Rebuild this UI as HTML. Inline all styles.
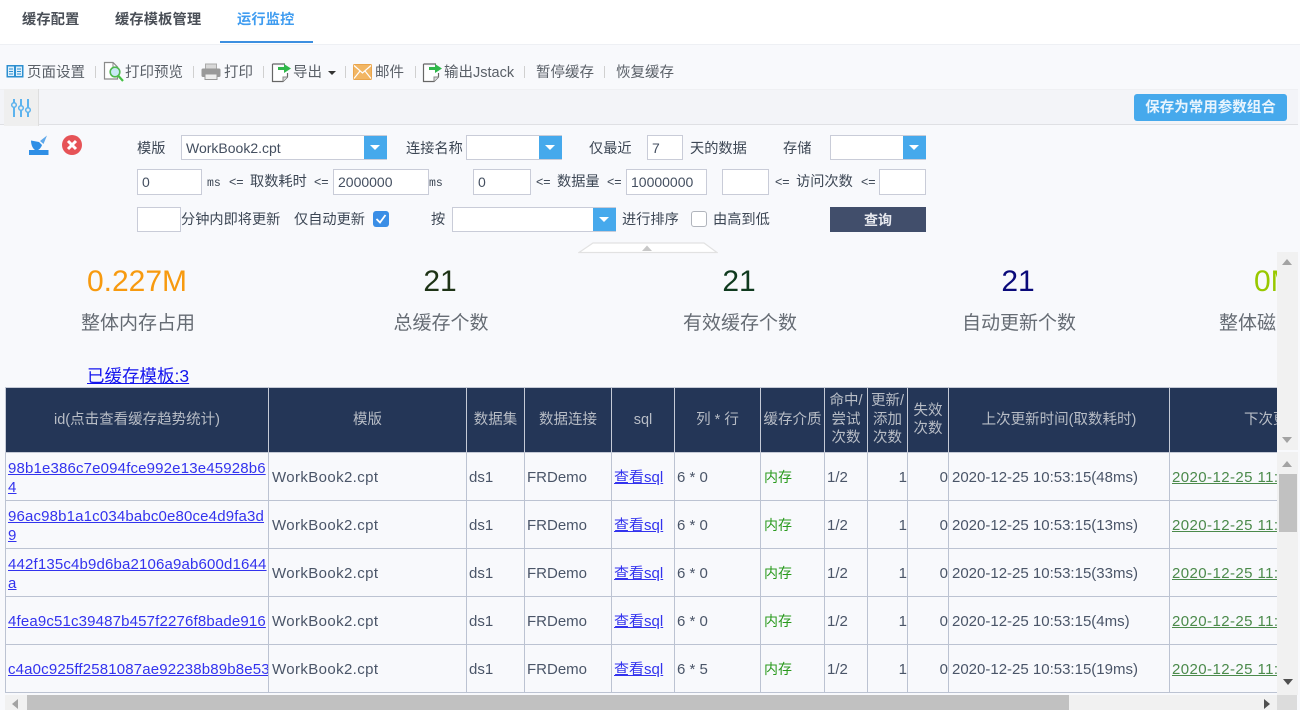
<!DOCTYPE html>
<html><head><meta charset="utf-8"><style>
html,body{margin:0;padding:0}
body{width:1300px;height:710px;position:relative;overflow:hidden;background:#f8f9fc;font-family:"Liberation Sans","Noto Sans CJK SC",sans-serif;color:#444f60;font-size:14px}
.a{position:absolute;white-space:nowrap}
.i{position:absolute;box-sizing:border-box;background:#fff;border:1px solid #c9ccd8;height:26px;padding:0 4px;line-height:24px;font-size:14px;color:#444f60}
.b{position:absolute;background:#46a9ec;height:23px;width:23px}
.b:after{content:"";position:absolute;left:6px;top:9px;border:5px solid transparent;border-top:5px solid #fff;border-bottom:0}
.sep{position:absolute;top:66px;width:1px;height:12px;background:#d0d0d0}
.t{font-size:14.5px;color:#5a6068;top:64px;line-height:18px}
.l{font-size:14.2px;color:#3c4654;line-height:20px}
.m{font-family:"Liberation Mono",monospace;font-size:11.5px}
.e{font-size:12.5px;color:#3c4654;line-height:20px}
.n{font-size:30px;line-height:36px;top:264px;transform:translateX(-50%)}
.c{font-size:19px;line-height:26px;top:311px;color:#666c74;transform:translateX(-50%)}
table{position:absolute;left:0;top:0;border-collapse:collapse;table-layout:fixed;width:1400px}
td,th{border:1px solid #bcc3d2;padding:0 2px;overflow:hidden;box-sizing:border-box}
th{background:#243657;color:#b8bdc6;font-weight:normal;font-size:14.5px;line-height:18.500px;border-color:#c5cad6;padding:0;height:65px}
td{height:48px;padding-top:2px;font-size:15px;line-height:19px;color:#4a5568;background:#f8f9fc;white-space:nowrap}
td a{color:#3333ee;text-decoration:underline}
td.id{letter-spacing:.16px}
td.w{padding-left:3px;letter-spacing:.38px}
td.x{padding-left:3px}
td.g{color:#2a9a1e;font-size:14px;padding-left:3px}
td a.h{color:#4b8a4b;letter-spacing:.42px}
td.r{text-align:right;padding-right:0}
</style></head><body>

<div class="a" style="left:0;top:0;width:1300px;height:44px;background:#fff"></div>
<div class="a" style="left:0;top:44px;width:1300px;height:1px;background:#eef0f4"></div>
<div class="a" style="left:22px;top:10px;font-size:14.200px;line-height:20px;font-weight:bold;color:#4a4f57;letter-spacing:.2px">缓存配置</div>
<div class="a" style="left:115px;top:10px;font-size:14.200px;line-height:20px;font-weight:bold;color:#4a4f57;letter-spacing:.2px">缓存模板管理</div>
<div class="a" style="left:237px;top:10px;font-size:14.200px;line-height:20px;font-weight:bold;color:#3f9cf0;letter-spacing:.2px">运行监控</div>
<div class="a" style="left:220px;top:41px;width:93px;height:2px;background:#3d8fe0"></div>

<!-- toolbar -->
<svg class="a" style="left:6px;top:64px" width="18" height="15" viewBox="0 0 18 15"><rect x=".5" y="1" width="17" height="12.500" fill="#2d8fd0"/><rect x="2" y="2.500" width="6" height="9.500" fill="#dff0fb"/><rect x="10" y="2.500" width="6" height="9.500" fill="#dff0fb"/><path d="M3 5h4M3 7.500h4M3 10h4M11 5h4M11 7.500h4M11 10h4" stroke="#2d8fd0"/></svg>
<div class="a t" style="left:27px">页面设置</div><div class="sep" style="left:95px"></div>
<svg class="a" style="left:103px;top:61px" width="22" height="22" viewBox="0 0 22 22"><path d="M1.500 1.500H10L14.500 6V18H1.500Z" fill="#fff" stroke="#8a8a8a" stroke-width="1.200"/><path d="M10 1.500V6H14.500" fill="none" stroke="#8a8a8a"/><circle cx="12" cy="11" r="4.800" fill="#c8e9f7" stroke="#4fb84f" stroke-width="1.600"/><path d="M15.500 15L20 20" stroke="#45c045" stroke-width="2.200"/></svg>
<div class="a t" style="left:125px">打印预览</div><div class="sep" style="left:193px"></div>
<svg class="a" style="left:201px;top:63px" width="20" height="18" viewBox="0 0 20 18"><rect x="4.500" y="1" width="11" height="5" fill="#d8d8d8" stroke="#aaa"/><rect x=".5" y="5.500" width="19" height="8.500" rx="1.500" fill="#999"/><rect x="4" y="11" width="12" height="5.500" fill="#eee" stroke="#999"/></svg>
<div class="a t" style="left:224px">打印</div><div class="sep" style="left:263px"></div>
<svg class="a" style="left:271px;top:61px" width="22" height="22" viewBox="0 0 22 22"><path d="M1.500 3H14M1.500 3V20.500H12L16.500 16V12" fill="#fff" stroke="#666" stroke-width="1.200"/><path d="M12 20.500V16H16.500" fill="#ddd" stroke="#888"/><path d="M7 6h6V3l7 4.500-7 4.500V9H7Z" fill="#2fb84a"/></svg>
<div class="a t" style="left:293px">导出</div>
<div class="a" style="left:328px;top:71px;border:4px solid transparent;border-top:4px solid #333;border-bottom:0"></div>
<div class="sep" style="left:345px"></div>
<svg class="a" style="left:353px;top:64px" width="19" height="16" viewBox="0 0 19 16"><rect x=".5" y=".5" width="18" height="15" rx="1" fill="#f2b664" stroke="#eaa54c"/><path d="M1 1.500L9.500 9 18 1.500M1 14.500L7 7M18 14.500L12 7" fill="none" stroke="#fff" stroke-width="1.200"/></svg>
<div class="a t" style="left:375px">邮件</div><div class="sep" style="left:415px"></div>
<svg class="a" style="left:422px;top:61px" width="22" height="22" viewBox="0 0 22 22"><path d="M1.500 3H14M1.500 3V20.500H12L16.500 16V12" fill="#fff" stroke="#666" stroke-width="1.200"/><path d="M12 20.500V16H16.500" fill="#ddd" stroke="#888"/><path d="M7 6h6V3l7 4.500-7 4.500V9H7Z" fill="#2fb84a"/></svg>
<div class="a t" style="left:444px">输出Jstack</div><div class="sep" style="left:524px"></div>
<div class="a t" style="left:536px">暂停缓存</div><div class="sep" style="left:604px"></div>
<div class="a t" style="left:616px">恢复缓存</div>

<!-- param bar -->
<div class="a" style="left:0;top:89px;width:1298px;height:34px;background:#f3f4f8;border-top:1px solid #eff0f3;border-bottom:1px solid #dfe0e4;box-sizing:content-box"></div>
<div class="a" style="left:4px;top:89px;width:34px;height:37px;background:#efefef;border-right:1px solid #dedede"></div>
<svg class="a" style="left:10px;top:97px" width="24" height="22" viewBox="0 0 24 22"><path d="M4 2V20M11 2V20M18 2V20" stroke="#5cb3ee" stroke-width="2"/><circle cx="4" cy="8" r="2.300" fill="#efefef" stroke="#5cb3ee" stroke-width="1.500"/><circle cx="11" cy="11" r="2.300" fill="#efefef" stroke="#5cb3ee" stroke-width="1.500"/><circle cx="18" cy="13" r="2.300" fill="#efefef" stroke="#5cb3ee" stroke-width="1.500"/></svg>
<div class="a" style="left:1134px;top:94px;width:153px;height:27px;background:#46a9ec;border-radius:3px;color:#e8f4fd;font-size:14.500px;line-height:28px;text-align:center;font-weight:bold">保存为常用参数组合</div>

<svg class="a" style="left:28px;top:135px" width="21" height="21" viewBox="0 0 21 21"><path d="M1 15h19.500v5H1z" fill="#2f8fe6"/><path d="M3 5.500l8 1.500 3 3c-1 3-3 5-5.500 5.500C5 15 3 10 3 5.500Z" fill="#2f8fe6"/><path d="M12 6L19 .5 15.500 9Z" fill="#5fa8ea"/></svg>
<svg class="a" style="left:62px;top:135px" width="20" height="20" viewBox="0 0 20 20"><circle cx="10" cy="10" r="10" fill="#e65357"/><path d="M6 6L14 14M14 6L6 14" stroke="#fff" stroke-width="3"/></svg>

<!-- form -->
<div class="a l" style="left:137px;top:139px">模版</div>
<div class="i" style="left:181px;top:135px;width:206px;height:25px;line-height:25px">WorkBook2.cpt</div><div class="b" style="left:364px;top:136px"></div>
<div class="a l" style="left:406px;top:139px">连接名称</div>
<div class="i" style="left:466px;top:135px;width:96px;height:25px"></div><div class="b" style="left:539px;top:136px"></div>
<div class="a l" style="left:589px;top:139px">仅最近</div>
<div class="i" style="left:647px;top:135px;width:36px;height:25px;line-height:25px">7</div>
<div class="a l" style="left:690px;top:139px">天的数据</div>
<div class="a l" style="left:783px;top:139px">存储</div>
<div class="i" style="left:830px;top:135px;width:96px;height:25px"></div><div class="b" style="left:903px;top:136px"></div>

<div class="i" style="left:137px;top:169px;width:65px">0</div>
<div class="a m" style="left:207px;top:174px;line-height:20px;color:#3c4654">ms</div>
<div class="a e" style="left:229px;top:172px">&lt;=</div>
<div class="a l" style="left:250px;top:172px">取数耗时</div>
<div class="a e" style="left:314px;top:172px">&lt;=</div>
<div class="i" style="left:333px;top:169px;width:96px">2000000</div>
<div class="a m" style="left:429px;top:174px;line-height:20px;color:#3c4654">ms</div>
<div class="i" style="left:473px;top:169px;width:58px">0</div>
<div class="a e" style="left:536px;top:172px">&lt;=</div>
<div class="a l" style="left:557px;top:172px">数据量</div>
<div class="a e" style="left:607px;top:172px">&lt;=</div>
<div class="i" style="left:626px;top:169px;width:81px">10000000</div>
<div class="i" style="left:722px;top:169px;width:47px"></div>
<div class="a e" style="left:775px;top:172px">&lt;=</div>
<div class="a l" style="left:796px;top:172px">访问次数</div>
<div class="a e" style="left:861px;top:172px">&lt;=</div>
<div class="i" style="left:879px;top:169px;width:47px"></div>

<div class="i" style="left:137px;top:207px;width:44px;height:25px"></div>
<div class="a l" style="left:181px;top:210px">分钟内即将更新</div>
<div class="a l" style="left:294px;top:210px">仅自动更新</div>
<div class="a" style="left:373px;top:211px;width:16px;height:16px;border-radius:3px;background:#3a8ee6"></div>
<svg class="a" style="left:373px;top:211px" width="16" height="16" viewBox="0 0 16 16"><path d="M3.500 8L7 11.500 12.500 4" fill="none" stroke="#fff" stroke-width="1.800"/></svg>
<div class="a l" style="left:431px;top:210px">按</div>
<div class="i" style="left:452px;top:207px;width:164px;height:25px"></div><div class="b" style="left:593px;top:208px;height:23px"></div>
<div class="a l" style="left:622px;top:210px">进行排序</div>
<div class="a" style="left:691px;top:211px;width:16px;height:16px;box-sizing:border-box;border-radius:3px;border:1px solid #b0b4bc;background:#fff"></div>
<div class="a l" style="left:713px;top:210px">由高到低</div>
<div class="a" style="left:830px;top:207px;width:96px;height:25px;background:#414e6b;color:#e6e8ee;font-size:14px;line-height:26px;text-align:center;font-weight:bold">查询</div>

<svg class="a" style="left:578px;top:242px" width="140" height="12" viewBox="0 0 140 12"><path d="M1 10.500L15 1H126L139 10.500Z" fill="#fff" stroke="#e2e2e2" stroke-width="1.200"/><path d="M64 9L69 3.500 74 9Z" fill="#c8c8c8"/></svg>

<!-- stats -->
<div class="a n" style="left:137px;color:#f79a0f">0.227M</div>
<div class="a n" style="left:440px;color:#1e3316">21</div>
<div class="a n" style="left:739px;color:#0f3a1e">21</div>
<div class="a n" style="left:1018px;color:#0a0a7a">21</div>
<div class="a n" style="left:1254px;transform:none;color:#98c800">0M</div>
<div class="a c" style="left:138px">整体内存占用</div>
<div class="a c" style="left:441px">总缓存个数</div>
<div class="a c" style="left:740px">有效缓存个数</div>
<div class="a c" style="left:1019px">自动更新个数</div>
<div class="a c" style="left:1219px;transform:none">整体磁</div>

<div class="a" style="left:87px;top:364px;font-size:17.500px;line-height:24px;color:#1414ee;text-decoration:underline">已缓存模板:3</div>

<!-- table -->
<div class="a" style="left:5px;top:387px;width:1272px;height:306px;overflow:hidden">
<table>
<colgroup><col style="width:263px"><col style="width:198px"><col style="width:58px"><col style="width:87px"><col style="width:63px"><col style="width:86px"><col style="width:64px"><col style="width:43px"><col style="width:40px"><col style="width:41px"><col style="width:221px"><col style="width:236px"></colgroup>
<tr><th>id(点击查看缓存趋势统计)</th><th>模版</th><th>数据集</th><th>数据连接</th><th>sql</th><th>列 * 行</th><th>缓存介质</th><th>命中/<br>尝试<br>次数</th><th>更新/<br>添加<br>次数</th><th>失效<br>次数</th><th>上次更新时间(取数耗时)</th><th>下次更新时间</th></tr>
<tr><td class="id"><a>98b1e386c7e094fce992e13e45928b6<br>4</a></td><td class="w">WorkBook2.cpt</td><td>ds1</td><td>FRDemo</td><td><a>查看sql</a></td><td>6 * 0</td><td class="g">内存</td><td>1/2</td><td class="r">1</td><td class="r">0</td><td class="x">2020-12-25 10:53:15(48ms)</td><td><a class="h">2020-12-25 11:53:15</a></td></tr>
<tr><td class="id"><a>96ac98b1a1c034babc0e80ce4d9fa3d<br>9</a></td><td class="w">WorkBook2.cpt</td><td>ds1</td><td>FRDemo</td><td><a>查看sql</a></td><td>6 * 0</td><td class="g">内存</td><td>1/2</td><td class="r">1</td><td class="r">0</td><td class="x">2020-12-25 10:53:15(13ms)</td><td><a class="h">2020-12-25 11:53:15</a></td></tr>
<tr><td class="id"><a>442f135c4b9d6ba2106a9ab600d1644<br>a</a></td><td class="w">WorkBook2.cpt</td><td>ds1</td><td>FRDemo</td><td><a>查看sql</a></td><td>6 * 0</td><td class="g">内存</td><td>1/2</td><td class="r">1</td><td class="r">0</td><td class="x">2020-12-25 10:53:15(33ms)</td><td><a class="h">2020-12-25 11:53:15</a></td></tr>
<tr><td class="id"><a>4fea9c51c39487b457f2276f8bade916</a></td><td class="w">WorkBook2.cpt</td><td>ds1</td><td>FRDemo</td><td><a>查看sql</a></td><td>6 * 0</td><td class="g">内存</td><td>1/2</td><td class="r">1</td><td class="r">0</td><td class="x">2020-12-25 10:53:15(4ms)</td><td><a class="h">2020-12-25 11:53:15</a></td></tr>
<tr><td class="id"><a>c4a0c925ff2581087ae92238b89b8e53</a></td><td class="w">WorkBook2.cpt</td><td>ds1</td><td>FRDemo</td><td><a>查看sql</a></td><td>6 * 5</td><td class="g">内存</td><td>1/2</td><td class="r">1</td><td class="r">0</td><td class="x">2020-12-25 10:53:15(19ms)</td><td><a class="h">2020-12-25 11:53:15</a></td></tr>
</table>
</div>

<!-- scrollbars -->
<div class="a" style="left:1277px;top:252px;width:21px;height:198px;background:#f1f1f1"></div>
<div class="a" style="left:1277px;top:452px;width:21px;height:243px;background:#f1f1f1"></div>
<div class="a" style="left:1279px;top:474px;width:18px;height:58px;background:#c1c1c1"></div>
<div class="a" style="left:1282px;top:259px;border:5px solid transparent;border-bottom:6px solid #a3a3a3;border-top:0"></div>
<div class="a" style="left:1282px;top:437px;border:5px solid transparent;border-top:6px solid #a3a3a3;border-bottom:0"></div>
<div class="a" style="left:1282px;top:461px;border:5px solid transparent;border-bottom:6px solid #a3a3a3;border-top:0"></div>
<div class="a" style="left:1283px;top:679px;border:5px solid transparent;border-top:6px solid #505050;border-bottom:0"></div>
<div class="a" style="left:5px;top:695px;width:1272px;height:15px;background:#f1f1f1"></div>
<div class="a" style="left:27px;top:695px;width:1042px;height:15px;background:#c1c1c1"></div>
<div class="a" style="left:12px;top:699px;border:5px solid transparent;border-right:6px solid #a3a3a3;border-left:0"></div>
<div class="a" style="left:1264px;top:699px;border:5px solid transparent;border-left:6px solid #505050;border-right:0"></div>
<div class="a" style="left:1277px;top:695px;width:20px;height:15px;background:#dcdcdc"></div>
</body></html>
